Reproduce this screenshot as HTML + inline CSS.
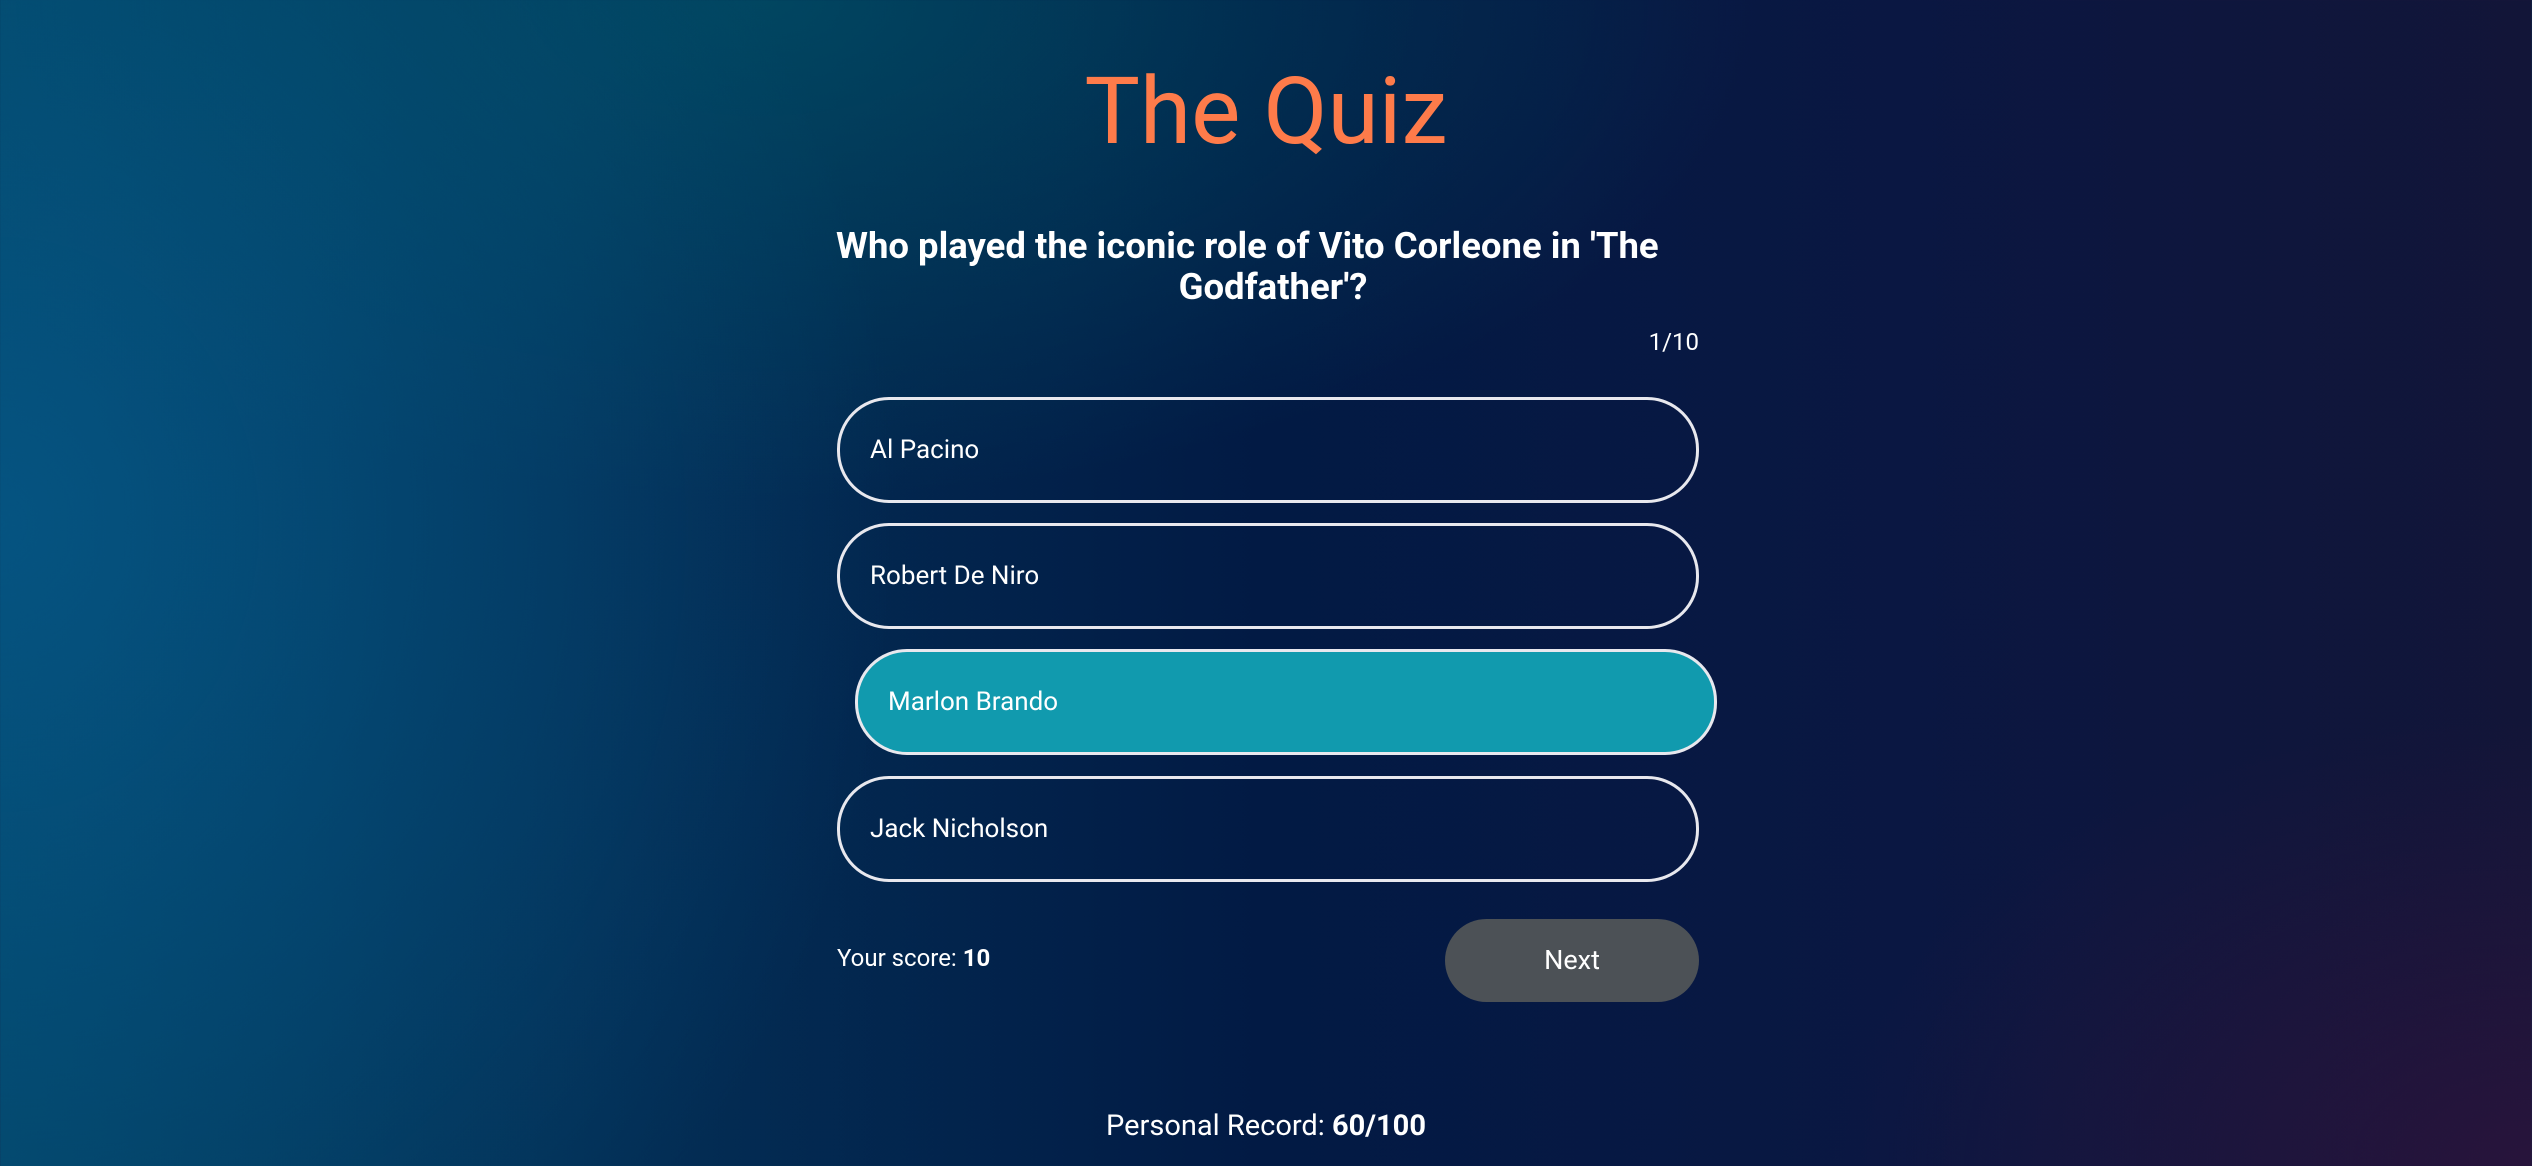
<!DOCTYPE html>
<html><head><meta charset="utf-8"><style>
html,body{margin:0;padding:0}
body{width:2532px;height:1166px;overflow:hidden;position:relative;font-family:"Roboto","Liberation Sans",sans-serif;color:#fff;
background:
radial-gradient(ellipse 900px 1000px at 0% 45%, rgba(6,90,140,0.7), rgba(6,90,140,0) 100%),
radial-gradient(ellipse 1000px 500px at 30% 0%, rgba(0,85,105,0.65), rgba(0,85,105,0) 100%),
radial-gradient(ellipse 700px 450px at 100% 100%, rgba(45,20,60,0.8), rgba(45,20,60,0) 100%),
linear-gradient(90deg,#034466 0%,#032e55 25%,#021a44 50%,#0a1742 75%,#121538 100%);}
.t{position:absolute;left:0;width:2532px;text-align:center}
h1{position:absolute;left:0;width:2532px;text-align:center;margin:0;top:47px;font-size:93px;font-weight:400;color:#fe7b4a;line-height:130px}
.q{position:absolute;font-size:36.5px;font-weight:700;line-height:43px;white-space:nowrap}
.n{position:absolute;right:833px;top:328px;font-size:24px}
.o{position:absolute;left:837px;width:856px;height:100px;border:3px solid #e8e8ee;border-radius:52px;box-sizing:content-box;font-size:26px;line-height:100px}
.o span{position:absolute;left:30px}
.s{background:#119aae}
.sc{position:absolute;left:837px;top:944px;font-size:24px}
.nx{position:absolute;left:1445px;top:919px;width:254px;height:83px;border-radius:42px;background:#4c5156;text-align:center;line-height:83px;font-size:27px}
.pr{top:1109px;font-size:29px}
</style></head><body>
<h1>The Quiz</h1>
<div class="q" style="left:836px;top:224px">Who played the iconic role of Vito Corleone in 'The</div>
<div class="q" style="left:0;width:2546px;text-align:center;top:265px">Godfather'?</div>
<div class="n">1/10</div>
<div class="o" style="top:397px"><span>Al Pacino</span></div>
<div class="o" style="top:523px"><span>Robert De Niro</span></div>
<div class="o s" style="top:649px;left:855px"><span>Marlon Brando</span></div>
<div class="o" style="top:776px"><span>Jack Nicholson</span></div>
<div class="sc">Your score: <b>10</b></div>
<div class="nx">Next</div>
<div class="t pr">Personal Record: <b>60/100</b></div>
</body></html>
